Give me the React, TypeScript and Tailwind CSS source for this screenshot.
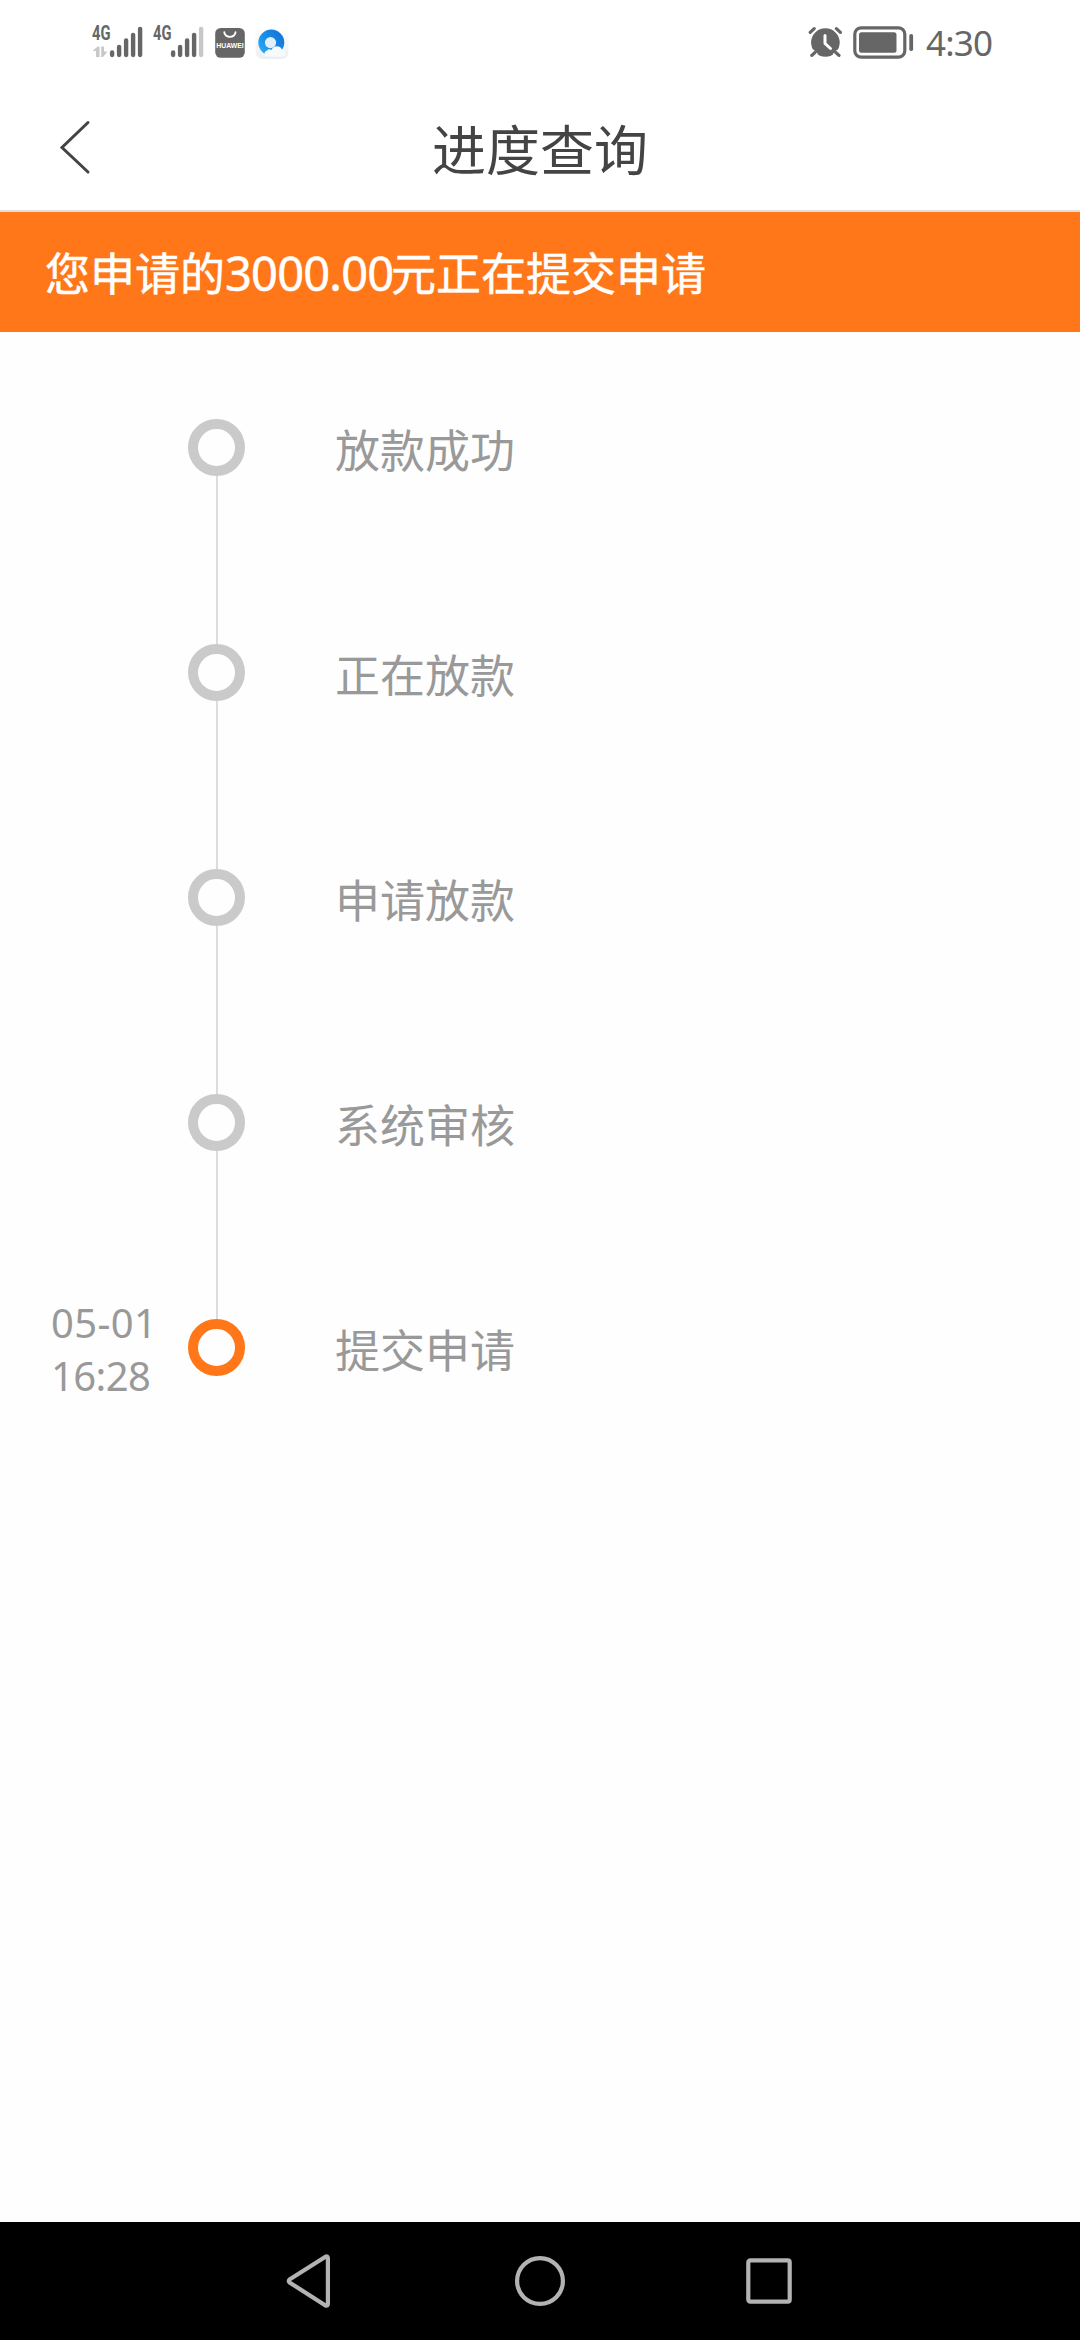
type Step = { label: string; date?: string; time?: string; active?: boolean };

const steps: Step[] = [
  { label: "放款成功" },
  { label: "正在放款" },
  { label: "申请放款" },
  { label: "系统审核" },
  { label: "提交申请", date: "05-01", time: "16:28", active: true },
];

const barTops = [30.3, 24.7, 18.3, 12.7, 6.7];

function Signal({ arrows = false, weak = false }: { arrows?: boolean; weak?: boolean }) {
  return (
    <svg width="52" height="40" viewBox="0 0 52 40" className="shrink-0">
      <text
        x="0"
        y="20.2"
        fontSize="20"
        fontWeight="700"
        fontFamily="Roboto, sans-serif"
        fill="#666"
        textLength="18.5"
        lengthAdjust="spacingAndGlyphs"
      >
        4G
      </text>
      {arrows && (
        <g fill="#c8c8c8">
          <path d="M4 37V31H0.6L5.6 26.5H7.6V37Z" />
          <path d="M9.2 26.5H12V31.5H15.5L11 37H9.2Z" />
        </g>
      )}
      {barTops.map((top, i) => (
        <rect
          key={top}
          x={17.9 + i * 7}
          y={top}
          width="4.4"
          height={37.2 - top}
          rx="2.1"
          fill={weak && i === 4 ? "#c8c8c8" : "#666"}
        />
      ))}
    </svg>
  );
}

function StoreIcon() {
  return (
    <svg width="30" height="40" viewBox="0 0 30 40" className="shrink-0">
      <rect x="0.2" y="8" width="29.6" height="29.8" rx="5.5" fill="#666" />
      <path d="M9.3 12.3A5.6 4.6 0 0 0 20.5 12.3" fill="none" stroke="#fff" strokeWidth="1.9" strokeLinecap="round" />
      <text
        x="1.2"
        y="28"
        fontSize="7.2"
        fontWeight="700"
        fontFamily="Liberation Sans, sans-serif"
        fill="#fff"
        textLength="27.6"
        lengthAdjust="spacingAndGlyphs"
      >
        HUAWEI
      </text>
    </svg>
  );
}

function BrowserIcon() {
  return (
    <svg width="34" height="40" viewBox="0 0 34 40" className="shrink-0">
      <defs>
        <linearGradient id="tile" x1="0" y1="0" x2="0" y2="1">
          <stop offset="0" stopColor="#ffffff" />
          <stop offset="1" stopColor="#eceff1" />
        </linearGradient>
        <linearGradient id="ring" x1="0" y1="1" x2="1" y2="0.2">
          <stop offset="0" stopColor="#36b4f5" />
          <stop offset="0.5" stopColor="#168fe8" />
          <stop offset="1" stopColor="#1672d6" />
        </linearGradient>
      </defs>
      <rect x="0.5" y="6" width="33" height="33" rx="7" fill="url(#tile)" />
      <circle cx="16.3" cy="22.6" r="13" fill="url(#ring)" />
      <circle cx="15.5" cy="22.6" r="5.6" fill="#e4eef7" />
      <path
        d="M12.5 36.5C8.5 36 8.6 31.2 12.2 30.4C13 29 15 28.8 16.4 30C18 25.6 24.6 24.6 27 29.4C31.9 29.5 32.1 36 27.5 36.8Z"
        fill="#f7fafc"
      />
    </svg>
  );
}

function AlarmIcon() {
  return (
    <svg width="36" height="40" viewBox="0 0 36 40" className="shrink-0">
      <circle cx="17.4" cy="22.5" r="14.3" fill="#666" />
      <path
        d="M2.2 12.3L6.2 8.6M32.4 12.3L28.4 8.6M7 32.5L3.8 35.4M27.8 32.5L31 35.4"
        stroke="#fff"
        strokeWidth="6.4"
        strokeLinecap="round"
      />
      <circle cx="17.4" cy="22.5" r="13.6" fill="#666" />
      <path
        d="M2.2 12.3L6.2 8.6M32.4 12.3L28.4 8.6M7 32.5L3.8 35.4M27.8 32.5L31 35.4"
        stroke="#666"
        strokeWidth="3.2"
        strokeLinecap="round"
      />
      <path d="M17 15.5V23.5L22.5 28.5" fill="none" stroke="#fff" strokeWidth="3" strokeLinecap="round" strokeLinejoin="round" />
    </svg>
  );
}

function BatteryIcon() {
  return (
    <svg width="62" height="40" viewBox="0 0 62 40" className="shrink-0">
      <rect x="1.8" y="7.8" width="50" height="29.4" rx="6.5" fill="none" stroke="#666" strokeWidth="3.2" />
      <rect x="6" y="12.3" width="37.5" height="20.4" rx="2.5" fill="#666" />
      <rect x="56.3" y="14" width="3.8" height="17" rx="1.7" fill="#666" />
    </svg>
  );
}

function StatusBar() {
  return (
    <div className="flex h-[84px] items-start justify-between pt-5 pr-[86px] pl-[92px]">
      <div className="flex">
        <Signal arrows />
        <div className="ml-[9px] flex">
          <Signal weak />
        </div>
        <div className="ml-[10px] flex">
          <StoreIcon />
        </div>
        <div className="ml-[10px] flex">
          <BrowserIcon />
        </div>
      </div>
      <div className="flex">
        <AlarmIcon />
        <div className="ml-[9px] flex">
          <BatteryIcon />
        </div>
        <span className="ml-[11px] h-10 w-[68px] pt-[3px] font-['Noto_Sans'] text-[35px] leading-10 tracking-[-0.8px] whitespace-nowrap text-[#666]">
          4:30
        </span>
      </div>
    </div>
  );
}

function Header() {
  return (
    <header className="grid h-[128px] grid-cols-[1fr_auto_1fr] items-start border-b-2 border-[#dfdcda]">
      <svg width="36" height="56" viewBox="0 0 36 56" className="mt-[35px] ml-[56px]">
        <path
          d="M32 3.5L6 28.5L32 53"
          fill="none"
          stroke="#444"
          strokeWidth="3"
          strokeLinecap="round"
        />
      </svg>
      <h1 className="pt-[24px] text-[54px] leading-[80px] text-[#444]">进度查询</h1>
    </header>
  );
}

function StepRow({ step, last }: { step: Step; last: boolean }) {
  return (
    <li className="flex h-[225px]">
      <div className="w-[188px] pl-[51px] font-['Noto_Sans'] text-[40px] leading-[53px] text-[#999]">
        {step.date && (
          <div className="-mt-[23px]">
            <div className="tracking-[0.4px]">{step.date}</div>
            <div className="tracking-[-0.6px]">{step.time}</div>
          </div>
        )}
      </div>
      <div className="flex w-[57px] flex-col items-center">
        <div
          className={
            step.active
              ? "size-[57px] shrink-0 rounded-full border-[10.5px] border-[#ff7718]"
              : "size-[57px] shrink-0 rounded-full border-[10.5px] border-[#cacaca]"
          }
        />
        {!last && <div className="w-[2px] flex-1 bg-[#dcdcdc]" />}
      </div>
      <span className="ml-[90px] text-[45px] leading-[60px] text-[#999]">{step.label}</span>
    </li>
  );
}

function NavBar() {
  return (
    <nav className="flex h-[118px] items-center bg-black pl-[284px]">
      <svg width="50" height="54" viewBox="0 0 50 54" fill="none" stroke="#b3b3b3" strokeWidth="4.2">
        <path d="M5.5 25.6Q4 27 5.5 28.4L41.5 51.5Q43.8 52.4 43.9 50V4Q43.8 1.8 41.5 2.7Z" strokeLinejoin="round" />
      </svg>
      <svg width="54" height="54" viewBox="0 0 54 54" fill="none" stroke="#b3b3b3" strokeWidth="4.2" className="ml-[179px]">
        <circle cx="27" cy="27" r="22.9" />
      </svg>
      <svg width="50" height="50" viewBox="0 0 50 50" fill="none" stroke="#b3b3b3" strokeWidth="4.2" className="ml-[177px]">
        <rect x="4.3" y="4.3" width="41.4" height="41.4" rx="2" />
      </svg>
    </nav>
  );
}

export default function App() {
  return (
    <div className="flex h-[2340px] w-[1080px] flex-col overflow-hidden bg-white font-['Noto_Sans_CJK_SC',sans-serif]">
      <StatusBar />
      <Header />
      <div className="flex h-[120px] items-start bg-[#ff7718] pt-[30px] pl-[45px] text-[45px] leading-[60px] whitespace-nowrap text-white [-webkit-text-stroke:0.5px_white]">
        <span>您申请的</span>
        <span className="w-[166px] pt-px font-['Noto_Sans'] text-[47px] tracking-[-0.8px]">3000.00</span>
        <span>元正在提交申请</span>
      </div>
      <main className="flex-1 bg-[#fefefe] pt-[87px]">
        <ol>
          {steps.map((step, i) => (
            <StepRow key={step.label} step={step} last={i === steps.length - 1} />
          ))}
        </ol>
      </main>
      <NavBar />
    </div>
  );
}
